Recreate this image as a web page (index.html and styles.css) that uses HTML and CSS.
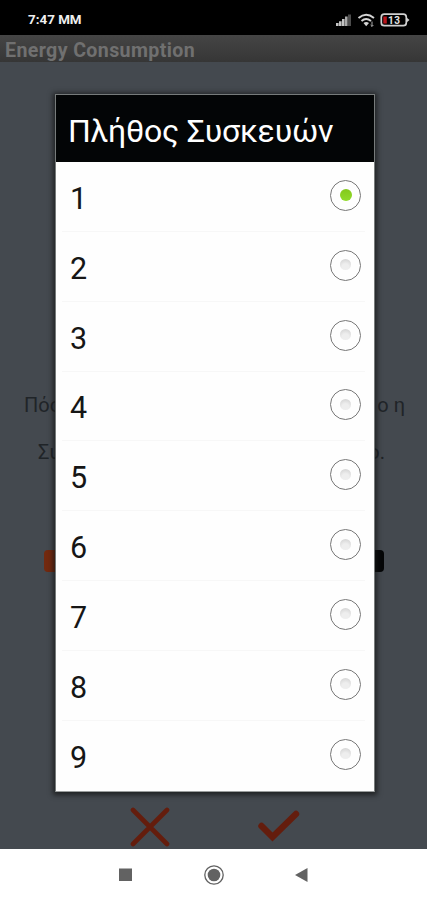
FILE: index.html
```html
<!DOCTYPE html>
<html lang="el">
<head>
<meta charset="utf-8">
<title>Energy Consumption</title>
<link rel="stylesheet" href="styles.css">
</head>
<body>
<div class="phone">
  <header class="status">
    <span class="clock">7:47 ΜΜ</span>
    <svg class="status-icons" width="76" height="16" viewBox="0 0 76 16">
      <path fill="#c4c4c4" d="M1 12h2.600v3H1zM4 10.200h2.600v4.800H4zM7 8h2.600v7H7z"/><path d="M10 5.500h2.600v9.500H10z" fill="#aaa"/><path d="M13 3.500h3v11.500h-3z" fill="#4c4c4c"/>
      <g fill="none" stroke="#d4d4d4" stroke-width="1.900"><path d="M23.500 7Q31 .5 39 7M26.500 10Q31 6 36 10"/></g>
      <path d="M28.500 12q2.800-2.200 5.500 0l-2.800 3.300z" fill="#d4d4d4"/>
      <path d="M37 10.500v5M35.600 14l1.400 1.400 1.400-1.400" stroke="#aaa" fill="none"/>
      <rect x="46.300" y="3.200" width="25" height="11.500" rx="3" fill="none" stroke="#d0d0d0" stroke-width="1.700"/>
      <path d="M71.500 6.500l3 2.500-3 2.500z" fill="#d0d0d0"/>
      <rect x="48.300" y="5.500" width="3.500" height="7" fill="#b9141b"/>
      <text x="53" y="12.500" class="charge">13</text>
    </svg>
  </header>
  <div class="appbar">Energy Consumption</div>
  <main class="screen">
    <div class="question first"><span>Πόσ</span><span>ο η</span></div>
    <div class="question second"><span>Συ</span><span>ο.</span></div>
    <div class="buttons"><span class="orange"></span><span class="black"></span></div>
    <div class="actions">
      <svg width="40" height="40" viewBox="0 0 40 40"><path d="M3 3L37 37M37 3L3 37" stroke="#641d0d" stroke-width="4.600" stroke-linecap="round"/></svg>
      <svg width="42" height="40" viewBox="0 0 42 40"><path d="M3.500 19L14.500 30L38 7" fill="none" stroke="#641d0d" stroke-width="6.400" stroke-linejoin="miter" stroke-linecap="round"/></svg>
    </div>
  </main>
  <nav class="nav">
    <svg width="427" height="51" viewBox="0 0 427 51">
      <rect x="119" y="19.500" width="13" height="12.500" fill="#626262"/>
      <circle cx="214" cy="26" r="9.200" fill="none" stroke="#626262" stroke-width="1.300"/>
      <circle cx="214" cy="26" r="6.300" fill="#626262"/>
      <path d="M295 26L307.500 19V33z" fill="#626262"/>
    </svg>
  </nav>
  <section class="dialog">
    <h1><span>Πλήθος Συσκευών</span></h1>
    <ul>
      <li><span>1</span><i class="radio on"></i></li>
      <li><span>2</span><i class="radio"></i></li>
      <li><span>3</span><i class="radio"></i></li>
      <li><span>4</span><i class="radio"></i></li>
      <li><span>5</span><i class="radio"></i></li>
      <li><span>6</span><i class="radio"></i></li>
      <li><span>7</span><i class="radio"></i></li>
      <li><span>8</span><i class="radio"></i></li>
      <li><span>9</span><i class="radio"></i></li>
    </ul>
  </section>
</div>
</body>
</html>
```
FILE: styles.css
```css
* { box-sizing: border-box; }
body { margin: 0; font-family: Roboto, "Noto Sans", sans-serif; }
.phone { position: relative; width: 427px; height: 900px; overflow: hidden; display: flex; flex-direction: column; background: #44494f; }
.status { height: 35px; background: #000; display: flex; justify-content: space-between; align-items: center; padding: 4px 16px 0 28px; }
.clock { color: #efefef; font-size: 13.4px; font-weight: 700; }
.status-icons { display: block; margin-top: -2px; }
.charge { font: 700 10px Roboto, sans-serif; fill: #e4e4e4; letter-spacing: .4px; }
.appbar { height: 27px; padding-left: 5px; font-size: 19.6px; line-height: 31px; font-weight: 700; color: #707070; background: linear-gradient(#454545, #363636); letter-spacing: .38px; white-space: nowrap; }
.screen { height: 787px; background: #44494f; }
.question { display: flex; justify-content: space-between; font-size: 20px; line-height: 24px; color: #202428; }
.first { margin: 0 22px 0 24px; padding-top: 331px; }
.second { margin: 23px 42px 0 38px; }
.buttons { display: flex; justify-content: space-between; margin: 86px 43px 0 44px; }
.buttons span { width: 40px; height: 22px; border-radius: 4px; }
.orange { background: #72290f; }
.black { background: #050607; }
.actions { display: flex; gap: 88px; margin: 235px 0 0 130px; }
.nav { height: 51px; background: #fff; }
.nav svg { display: block; }
.dialog { position: absolute; left: 55px; top: 94px; width: 320px; height: 698px; border: 1px solid #777b7b; border-bottom-color: #9a9d9d; background: #fefefe; box-shadow: 0 1px 5px 2px rgba(20, 22, 22, .75); }
.dialog h1 { margin: 0; height: 67px; padding: 0 0 0 12px; background: #030506; color: #fff; font-size: 32px; line-height: 73px; font-weight: 400; letter-spacing: -.22px; white-space: nowrap; }
.dialog ul { list-style: none; margin: 0; padding: 0; }
.dialog li { height: 69.85px; margin: 0 9px 0 6px; padding: 0 4px 0 8px; display: flex; align-items: center; justify-content: space-between; border-bottom: 1px solid #f7f7f7; color: #161616; font-size: 30.5px; }
.dialog li:last-child { border-color: transparent; }
.dialog li span { padding-top: 4px; }
.radio { width: 31px; height: 31px; margin-top: -2px; border: 1.5px solid #777; border-radius: 50%; display: flex; align-items: center; justify-content: center; }
.radio::after { content: ""; width: 11px; height: 11px; margin-top: -1px; border-radius: 50%; background: radial-gradient(circle at 50% 75%, #eee 35%, #cfcfcf 95%); }
.radio.on::after { width: 12px; height: 12px; margin-top: 0; background: linear-gradient(#84c81c, #91dc2a); }
```
